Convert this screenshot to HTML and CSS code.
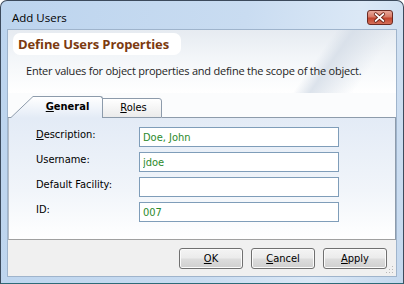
FILE: index.html
```html
<!DOCTYPE html>
<html>
<head>
<meta charset="utf-8">
<title>Add Users</title>
<link rel="stylesheet" href="styles.css">
</head>
<body>
<div class="window">
  <div class="titlebar">
    <span class="title">Add Users</span>
    <span class="close">
      <svg width="26" height="15" viewBox="0 0 26 15">
        <path d="M9 4 L17 11 M17 4 L9 11" stroke="#6a2418" stroke-width="3.6" stroke-linecap="round"/>
        <path d="M9 4 L17 11 M17 4 L9 11" stroke="#ffffff" stroke-width="2" stroke-linecap="round"/>
      </svg>
    </span>
  </div>
  <div class="client">
    <div class="header">
      <div class="heading">Define Users Properties</div>
      <p class="desc">Enter values for object properties and define the scope of the object.</p>
    </div>
    <div class="tabstrip">
      <svg class="slope" width="25" height="25" viewBox="0 0 25 25">
        <defs>
          <linearGradient id="tg" x1="0" y1="0" x2="0" y2="1">
            <stop offset="0" stop-color="#ffffff"/>
            <stop offset="1" stop-color="#e3ebf6"/>
          </linearGradient>
        </defs>
        <polygon points="3,24.5 25,3.5 25,25 3,25" fill="url(#tg)"/>
        <path d="M0 24.5 H3 L25 3.5" stroke="#8d9bab" stroke-width="1" fill="none"/>
      </svg>
      <div class="tab active"><u>G</u>eneral</div>
      <div class="tab"><u>R</u>oles</div>
      <div class="tabfill"></div>
    </div>
    <div class="panel">
      <div class="form">
        <label class="lbl"><u>D</u>escription:</label>
        <input class="field" type="text" value="Doe, John">
        <label class="lbl">Username:</label>
        <input class="field" type="text" value="jdoe">
        <label class="lbl">Default Facility:</label>
        <input class="field" type="text" value="">
        <label class="lbl">ID:</label>
        <input class="field" type="text" value="007">
      </div>
    </div>
    <div class="buttons">
      <button class="btn"><u>O</u>K</button>
      <button class="btn"><u>C</u>ancel</button>
      <button class="btn"><u>A</u>pply</button>
      <svg class="grip" width="8" height="8" viewBox="0 0 8 8">
        <rect x="6" y="0" width="1" height="1" fill="#b8b8b8"/>
        <rect x="3" y="3" width="1" height="1" fill="#b8b8b8"/>
        <rect x="6" y="3" width="1" height="1" fill="#b8b8b8"/>
        <rect x="0" y="6" width="1" height="1" fill="#b8b8b8"/>
        <rect x="3" y="6" width="1" height="1" fill="#b8b8b8"/>
        <rect x="6" y="6" width="1" height="1" fill="#b8b8b8"/>
      </svg>
    </div>
  </div>
</div>
</body>
</html>
```

FILE: styles.css
```css
* { box-sizing: border-box; }
html, body { margin: 0; padding: 0; }
body {
  width: 404px;
  height: 284px;
  overflow: hidden;
  background: #ffffff;
  font-family: "DejaVu Sans Condensed", "DejaVu Sans", sans-serif;
  font-stretch: condensed;
}
.window {
  width: 404px;
  height: 284px;
  border: 1px solid #3c4a5c;
  border-bottom-color: #2e6b78;
  border-radius: 7px 7px 0 0;
  background: linear-gradient(100deg, #bcd4ee 0%, #c9dcf1 55%, #dbe8f6 80%, #c4d8ee 100%);
  display: flex;
  flex-direction: column;
}
.titlebar {
  position: relative;
  height: 29px;
  padding: 3px 0 0 11px;
  display: flex;
  align-items: center;
}
.title {
  font-family: "Open Sans", "Noto Sans", sans-serif;
  font-stretch: normal;
  font-size: 11.5px;
  color: #000;
}
.close {
  position: absolute;
  right: 10px;
  top: 9px;
  width: 26px;
  height: 15px;
  border: 1px solid #6b2a22;
  border-radius: 3px;
  background: linear-gradient(to bottom, #e9a99b 0%, #d77a66 45%, #c2432c 55%, #d5705a 100%);
  display: flex;
}
.close svg { display: block; margin: -1px 0 0 -1px; }
.client {
  margin: 0 7px 7px 7px;
  height: 246px;
  display: flex;
  flex-direction: column;
  outline: 1px solid #9fb4cc;
  background: #ffffff;
}
.header {
  height: 63px;
  padding: 3px 0 0 5px;
  background:
    linear-gradient(125deg, rgba(255,255,255,0) 76%, rgba(214,222,232,0.85) 80%, rgba(255,255,255,0) 90%),
    linear-gradient(to bottom, #e6ebf1 0%, #f3f6f9 45%, #ffffff 100%);
}
.heading {
  display: inline-block;
  height: 22px;
  line-height: 22px;
  padding: 0 12px 0 5px;
  border-radius: 7px;
  background: #ffffff;
  font-family: "Open Sans", "Noto Sans", sans-serif;
  font-stretch: normal;
  font-weight: bold;
  font-size: 13px;
  letter-spacing: -0.1px;
  color: #7c3a10;
}
.desc {
  margin: 8px 0 0 13px;
  font-family: "Open Sans", "Noto Sans", sans-serif;
  font-stretch: normal;
  font-size: 11px;
  letter-spacing: -0.23px;
  color: #1e1e1e;
}
.tabstrip {
  height: 25px;
  display: flex;
  align-items: flex-end;
  background: #fbfcfd;
}
.slope { display: block; flex: none; }
.tab {
  font-size: 11px;
  color: #000;
  text-align: center;
}
.tab.active {
  width: 70px;
  height: 22px;
  line-height: 20px;
  font-weight: bold;
  border-top: 1px solid #8d9bab;
  border-right: 1px solid #8d9bab;
  border-radius: 0 3px 0 0;
  background: linear-gradient(to bottom, #ffffff, #e3ebf6);
  position: relative;
  z-index: 1;
}
.tab:not(.active) {
  width: 60px;
  height: 20px;
  line-height: 18px;
  margin-left: -1px;
  padding-left: 3px;
  border: 1px solid #8d9bab;
  border-radius: 0 3px 0 0;
  background: linear-gradient(to bottom, #ffffff, #ebebeb);
}
.tabfill {
  flex: 1;
  height: 1px;
  background: #8d9bab;
}
.panel {
  flex: 1;
  border-left: 1px solid #b4bcc6;
  border-right: 1px solid #8d9bab;
  border-bottom: 1px solid #a0a0a0;
  background: linear-gradient(to bottom, #e3ebf6 0%, #f1f5fa 60%, #ffffff 100%);
  padding: 9px 0 0 27px;
}
.form {
  display: grid;
  grid-template-columns: 103px 200px;
  grid-auto-rows: 20px;
  row-gap: 5px;
}
.lbl {
  font-size: 11px;
  line-height: 16px;
  color: #000;
}
.field {
  width: 200px;
  height: 20px;
  margin: 0;
  border: 1px solid #7f9db9;
  background: #ffffff;
  padding: 0 3px;
  font-family: "DejaVu Sans Condensed", "DejaVu Sans", sans-serif;
  font-stretch: condensed;
  font-size: 11px;
  color: #2c8a2c;
  outline: none;
}
.buttons {
  position: relative;
  height: 36px;
  padding: 8px 9px 0 0;
  display: flex;
  justify-content: flex-end;
  align-items: flex-start;
  gap: 8px;
  background: #f0f0f0;
}
.btn {
  width: 64px;
  height: 21px;
  margin: 0;
  padding: 0;
  border: 1px solid #707070;
  border-radius: 3px;
  background: linear-gradient(to bottom, #f4f4f4 0%, #ebebeb 48%, #dddddd 52%, #cfcfcf 100%);
  box-shadow: inset 0 0 0 1px #fbfbfb;
  font-family: "DejaVu Sans Condensed", "DejaVu Sans", sans-serif;
  font-stretch: condensed;
  font-size: 11px;
  color: #000;
}
.grip {
  position: absolute;
  right: 2px;
  bottom: 2px;
}
```
